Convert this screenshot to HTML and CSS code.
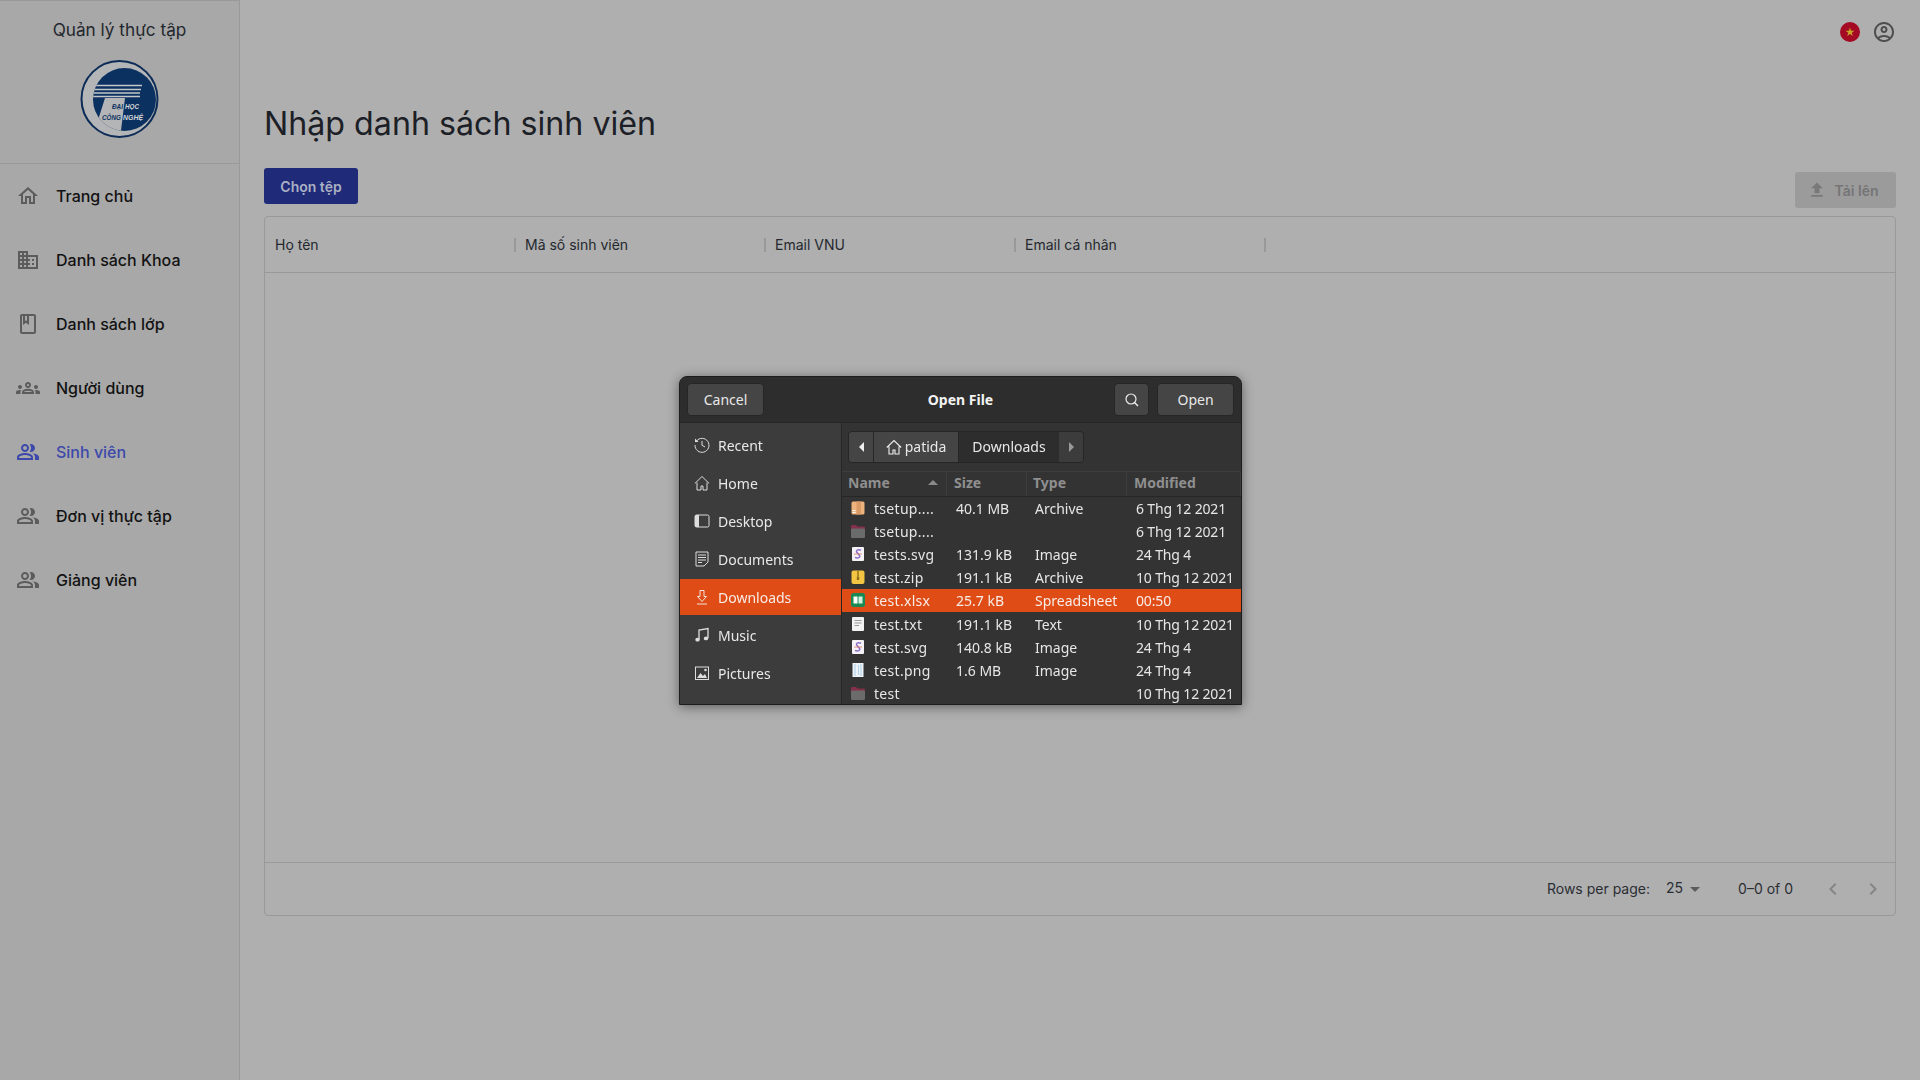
FILE: index.html
```html
<!DOCTYPE html>
<html lang="vi">
<head>
    <meta charset="UTF-8">
    <meta name="viewport" content="width=device-width, initial-scale=1.0">
    <title>Nhập danh sách sinh viên</title>
    <link rel="stylesheet" href="styles.css">
</head>
<body>

<svg class="defs" width="0" height="0">
    <symbol id="i-people" viewBox="0 0 24 24"><path d="M16.67 13.13C18.04 14.06 19 15.32 19 17v3h4v-3c0-2.18-3.57-3.47-6.33-3.87z"/><path d="M15 12c2.21 0 4-1.79 4-4s-1.79-4-4-4c-.47 0-.91.1-1.33.24C14.5 5.27 15 6.58 15 8s-.5 2.73-1.33 3.76c.42.14.86.24 1.33.24z"/><path d="M9 12c2.21 0 4-1.79 4-4s-1.79-4-4-4-4 1.79-4 4 1.79 4 4 4zm0-6c1.1 0 2 .9 2 2s-.9 2-2 2-2-.9-2-2 .9-2 2-2z"/><path d="M9 13c-2.67 0-8 1.34-8 4v3h16v-3c0-2.66-5.33-4-8-4zm6 5H3v-.99C3.2 16.29 6.3 15 9 15s5.8 1.29 6 2z"/></symbol>
    <symbol id="f-folder" viewBox="0 0 16 16"><path fill="#85304a" d="M1 3.500C1 2.500 1.600 2 2.500 2h3.500l1.500 1.500h6c1 0 1.500.5 1.500 1.500v2H1z"/><rect x="1" y="5.500" width="14" height="9.500" rx="1.300" fill="#6b6b6b"/></symbol>
    <symbol id="f-archive" viewBox="0 0 16 16"><rect x="1.5" y="1.5" width="13" height="13" rx="1.5" fill="#eeb27e"/><rect x="6.5" y="1.5" width="4.5" height="13" fill="#d99a66"/><rect x="2.5" y="10" width="3" height="1" fill="#fff"/><rect x="2.5" y="12" width="3" height="1" fill="#fff"/></symbol>
    <symbol id="f-svg" viewBox="0 0 16 16"><rect x="2" y="1" width="12" height="14" rx="1" fill="#f4f2f6"/><path d="M11 4.2C8 2.8 5.4 4.4 7 6.6l2.4 2.6c1.4 2-1.400 3.600-4.400 2.200" fill="none" stroke="#8a6cc8" stroke-width="1.500"/><path d="M4 8h8" stroke="#e2785a" stroke-width=".8"/></symbol>
    <symbol id="f-zip" viewBox="0 0 16 16"><rect x="1.500" y="1.500" width="13" height="13.500" rx="2" fill="#f4c542"/><rect x="7.300" y="1.500" width="1.400" height="7" fill="#8f6f1c"/><rect x="6.800" y="8" width="2.400" height="3" fill="#8f6f1c"/></symbol>
    <symbol id="f-xlsx" viewBox="0 0 16 16"><rect x="1" y="1" width="14" height="14" rx="2.500" fill="#1a8a55"/><rect x="3.500" y="4.500" width="4" height="7" fill="#fff"/><rect x="8.500" y="4.500" width="4" height="7" fill="#d5efe1"/></symbol>
    <symbol id="f-txt" viewBox="0 0 16 16"><rect x="2" y="1" width="12" height="14" rx="1" fill="#f2f2f2"/><path d="M4.500 4.500h7M4.500 7h7M4.500 9.500h4.500" stroke="#9a9a9a" stroke-width="1"/></symbol>
    <symbol id="f-png" viewBox="0 0 16 16"><rect x="2.500" y="1" width="11" height="14" fill="#eef3f8"/><path d="M5 2v12M8 3c2 3-1 6 1 10M11 2v12" stroke="#a9cbe6" stroke-width="1" fill="none"/></symbol>
</svg>

<div class="app">
    <aside class="sidebar">
        <div class="brand">
            <div class="brand-name">Quản lý thực tập</div>
            <svg class="logo" viewBox="0 0 80 80">
                <defs><clipPath id="disk"><circle cx="44.500" cy="40.500" r="31.500"/></clipPath></defs>
                <circle cx="39.500" cy="40" r="38" fill="#b4b5b6" stroke="#0c2c57" stroke-width="2"/>
                <circle cx="44.500" cy="40.500" r="31.500" fill="#0b3160"/>
                <g clip-path="url(#disk)">
                    <polygon points="25,39 45,39 40.700,74 8,74 19,58" fill="#b4b5b6"/>
                    <path d="M10 26.500H62M10 30.500H61M10 34H60M10 37.500H60" stroke="#c4c6c8" stroke-width="1.700"/>
                </g>
                <text class="logo-text" x="32" y="49.500" textLength="11" lengthAdjust="spacingAndGlyphs" fill="#0b3160">ĐẠI</text>
                <text class="logo-text" x="45" y="49.500" textLength="14" lengthAdjust="spacingAndGlyphs" fill="#d5d7d9">HỌC</text>
                <text class="logo-text" x="22" y="61" textLength="19" lengthAdjust="spacingAndGlyphs" fill="#0b3160">CÔNG</text>
                <text class="logo-text" x="43" y="61" textLength="20" lengthAdjust="spacingAndGlyphs" fill="#d5d7d9">NGHỆ</text>
            </svg>
        </div>
        <nav class="nav">
            <a class="nav-item">
                <svg class="nav-icon" viewBox="0 0 24 24"><path d="M12 5.690l5 4.500V18h-2v-6H9v6H7v-7.810l5-4.500M12 3L2 12h3v8h6v-6h2v6h6v-8h3L12 3z"/></svg>
                <span>Trang chủ</span>
            </a>
            <a class="nav-item">
                <svg class="nav-icon" viewBox="0 0 24 24"><path d="M12 7V3H2v18h20V7H12zM6 19H4v-2h2v2zm0-4H4v-2h2v2zm0-4H4V9h2v2zm0-4H4V5h2v2zm4 12H8v-2h2v2zm0-4H8v-2h2v2zm0-4H8V9h2v2zm0-4H8V5h2v2zm10 12h-8v-2h2v-2h-2v-2h2v-2h-2V9h8v10zm-2-8h-2v2h2v-2zm0 4h-2v2h2v-2z"/></svg>
                <span>Danh sách Khoa</span>
            </a>
            <a class="nav-item">
                <svg class="nav-icon" viewBox="0 0 24 24"><path d="M18 2H6c-1.100 0-2 .9-2 2v16c0 1.100.9 2 2 2h12c1.100 0 2-.9 2-2V4c0-1.100-.9-2-2-2zM9 4h2v5l-1-.75L9 9V4zm9 16H6V4h1v9l3-2.250L13 13V4h5v16z"/></svg>
                <span>Danh sách lớp</span>
            </a>
            <a class="nav-item">
                <svg class="nav-icon" viewBox="0 0 24 24"><path d="M4,13c1.100,0,2-0.900,2-2c0-1.100-0.900-2-2-2s-2,0.900-2,2C2,12.100,2.900,13,4,13z M5.130,14.100C4.760,14.040,4.390,14,4,14 c-0.990,0-1.930,0.210-2.780,0.580C0.480,14.900,0,15.620,0,16.430V18l4.500,0v-1.610C4.500,15.560,4.730,14.780,5.130,14.100z M20,13c1.100,0,2-0.900,2-2 c0-1.100-0.900-2-2-2s-2,0.900-2,2C18,12.100,18.900,13,20,13z M24,16.430c0-0.810-0.480-1.530-1.220-1.850C21.930,14.210,20.990,14,20,14 c-0.390,0-0.760,0.040-1.130,0.100c0.400,0.680,0.630,1.460,0.630,2.290V18l4.500,0V16.430z M16.240,13.650c-1.170-0.520-2.610-0.900-4.240-0.900 c-1.630,0-3.070,0.390-4.240,0.900C6.680,14.130,6,15.210,6,16.390V18h12v-1.610C18,15.210,17.320,14.130,16.240,13.650z M8.070,16 c0.090-0.230,0.130-0.390,0.910-0.690c0.970-0.380,1.990-0.560,3.020-0.560s2.050,0.180,3.020,0.560c0.770,0.300,0.810,0.460,0.910,0.690H8.070z M12,8 c0.550,0,1,0.450,1,1s-0.450,1-1,1s-1-0.450-1-1S11.450,8,12,8 M12,6c-1.660,0-3,1.340-3,3c0,1.660,1.340,3,3,3s3-1.340,3-3 C15,7.340,13.660,6,12,6L12,6z"/></svg>
                <span>Người dùng</span>
            </a>
            <a class="nav-item active">
                <svg class="nav-icon"><use href="#i-people"/></svg>
                <span>Sinh viên</span>
            </a>
            <a class="nav-item">
                <svg class="nav-icon"><use href="#i-people"/></svg>
                <span>Đơn vị thực tập</span>
            </a>
            <a class="nav-item">
                <svg class="nav-icon"><use href="#i-people"/></svg>
                <span>Giảng viên</span>
            </a>
        </nav>
    </aside>

    <main class="main">
        <div class="topbar">
            <svg class="flag" viewBox="0 0 20 20">
                <circle cx="10" cy="10" r="10" fill="#a50a24"/>
                <polygon points="10,5.500 11.100,8.700 14.500,8.700 11.800,10.700 12.800,14 10,12 7.200,14 8.200,10.700 5.500,8.700 8.900,8.700" fill="#c9a227"/>
            </svg>
            <svg class="account" viewBox="0 0 24 24"><path d="M12 2C6.480 2 2 6.480 2 12s4.480 10 10 10 10-4.480 10-10S17.520 2 12 2zM7.350 18.500C8.660 17.560 10.260 17 12 17s3.340.56 4.650 1.500c-1.310.94-2.910 1.500-4.650 1.500s-3.340-.56-4.650-1.500zm10.790-1.380C16.450 15.800 14.320 15 12 15s-4.450.8-6.140 2.120C4.700 15.730 4 13.950 4 12c0-4.420 3.580-8 8-8s8 3.580 8 8c0 1.950-.7 3.730-1.860 5.120z"/><path d="M12 6c-1.930 0-3.500 1.570-3.500 3.500S10.070 13 12 13s3.500-1.570 3.500-3.500S13.930 6 12 6zm0 5c-.83 0-1.500-.67-1.500-1.500S11.170 8 12 8s1.500.67 1.500 1.500S12.830 11 12 11z"/></svg>
        </div>

        <h1 class="page-title">Nhập danh sách sinh viên</h1>

        <div class="toolbar">
            <button class="btn-primary">Chọn tệp</button>
            <button class="btn-upload">
                <svg viewBox="0 0 24 24"><path d="M5 20h14v-2H5v2zm0-10h4v6h6v-6h4l-7-7-7 7z"/></svg>
                Tải lên
            </button>
        </div>

        <section class="table-card">
            <div class="table-head">
                <div class="col"><span>Họ tên</span><i class="col-sep"></i></div>
                <div class="col"><span>Mã số sinh viên</span><i class="col-sep"></i></div>
                <div class="col"><span>Email VNU</span><i class="col-sep"></i></div>
                <div class="col"><span>Email cá nhân</span><i class="col-sep"></i></div>
            </div>
            <div class="table-body"></div>
            <div class="table-foot">
                <span class="rows-label">Rows per page:</span>
                <span class="rows-value">25</span>
                <svg class="rows-arrow" viewBox="0 0 24 24"><path d="M7 10l5 5 5-5z"/></svg>
                <span class="rows-range">0–0 of 0</span>
                <svg class="pager" viewBox="0 0 24 24"><path d="M15.410 16.590L10.830 12l4.580-4.590L14 6l-6 6 6 6 1.410-1.410z"/></svg>
                <svg class="pager" viewBox="0 0 24 24"><path d="M8.590 16.590L13.170 12 8.590 7.410 10 6l6 6-6 6-1.410-1.410z"/></svg>
            </div>
        </section>
    </main>
</div>

<div class="scrim">
    <div class="dialog">
        <header class="dlg-head">
            <button class="dlg-btn dlg-cancel">Cancel</button>
            <div class="dlg-title">Open File</div>
            <button class="dlg-btn dlg-search">
                <svg viewBox="0 0 16 16"><circle cx="7" cy="7" r="5" fill="none" stroke="#eee" stroke-width="1.200"/><path d="M10.500 10.500l3.500 3.500" stroke="#eee" stroke-width="1.400"/></svg>
            </button>
            <button class="dlg-btn dlg-open">Open</button>
        </header>
        <div class="dlg-body">
            <ul class="places">
                <li><svg viewBox="0 0 16 16"><path d="M2.500 4A7 7 0 1 1 1 8" fill="none" stroke="#ddd" stroke-width="1"/><path d="M1 1.500V5h3.500z" fill="#ddd"/><path d="M8 4v4.300l3 1.700" fill="none" stroke="#ddd" stroke-width="1"/></svg>Recent</li>
                <li><svg viewBox="0 0 16 16"><path d="M.8 8.500L8 1.500l7.200 7M3 7.500V15h4v-4h2v4h4V7.500" fill="none" stroke="#ddd" stroke-width="1"/></svg>Home</li>
                <li><svg viewBox="0 0 16 16"><rect x="1" y="2" width="14" height="12" rx="1.500" fill="none" stroke="#ddd"/><path d="M1 3.500C1 2.500 1.500 2 2.500 2H5v12H2.500C1.500 14 1 13.500 1 12.500z" fill="#ddd"/></svg>Desktop</li>
                <li><svg viewBox="0 0 16 16"><path d="M2 1h12v10l-4 4H2z" fill="none" stroke="#ddd"/><path d="M4 4h8M4 6.500h8M4 9h8M4 11.500h4" stroke="#ddd"/></svg>Documents</li>
                <li class="selected"><svg viewBox="0 0 16 16"><path d="M6 1.500h4v6h2.500L8 12.500 3.500 7.500H6z" fill="none" stroke="#f3e3da"/><path d="M3 15h10" stroke="#f3e3da"/></svg>Downloads</li>
                <li><svg viewBox="0 0 16 16"><path d="M5 12.500V3l9-1.500V11" fill="none" stroke="#ddd" stroke-width="1.300"/><ellipse cx="3.500" cy="12.700" rx="2.200" ry="1.900" fill="#ddd"/><ellipse cx="12" cy="11.400" rx="2.200" ry="1.900" fill="#ddd"/></svg>Music</li>
                <li><svg viewBox="0 0 16 16"><rect x="1.500" y="2" width="13" height="12.500" fill="none" stroke="#ddd"/><path d="M3 13l3.500-5 2.500 3 2-2 2 4z" fill="#ddd"/><circle cx="11.500" cy="5" r="1.300" fill="#ddd"/></svg>Pictures</li>
            </ul>
            <div class="browser">
                <div class="pathbar-row">
                    <div class="pathbar">
                        <div class="crumb crumb-back"><i class="tri-left"></i></div>
                        <div class="crumb crumb-home">
                            <svg viewBox="0 0 16 16"><path d="M.8 8.500L8 1.500l7.200 7M3 7.500V15h4v-4h2v4h4V7.500" fill="none" stroke="#eee" stroke-width="1.100"/></svg>
                            patida
                        </div>
                        <div class="crumb crumb-current">Downloads</div>
                        <div class="crumb crumb-next"><i class="tri-right"></i></div>
                    </div>
                </div>
                <div class="file-head">
                    <div class="fh-name">Name<i class="tri-up"></i></div>
                    <div>Size</div>
                    <div>Type</div>
                    <div>Modified</div>
                </div>
                <div class="file-list">
                    <div class="file-row"><div class="fname"><svg><use href="#f-archive"/></svg>tsetup....</div><div>40.1 MB</div><div>Archive</div><div class="fdate">6 Thg 12 2021</div></div>
                    <div class="file-row"><div class="fname"><svg><use href="#f-folder"/></svg>tsetup....</div><div></div><div></div><div class="fdate">6 Thg 12 2021</div></div>
                    <div class="file-row"><div class="fname"><svg><use href="#f-svg"/></svg>tests.svg</div><div>131.9 kB</div><div>Image</div><div class="fdate">24 Thg 4</div></div>
                    <div class="file-row"><div class="fname"><svg><use href="#f-zip"/></svg>test.zip</div><div>191.1 kB</div><div>Archive</div><div class="fdate">10 Thg 12 2021</div></div>
                    <div class="file-row selected"><div class="fname"><svg><use href="#f-xlsx"/></svg>test.xlsx</div><div>25.7 kB</div><div>Spreadsheet</div><div class="fdate">00:50</div></div>
                    <div class="file-row"><div class="fname"><svg><use href="#f-txt"/></svg>test.txt</div><div>191.1 kB</div><div>Text</div><div class="fdate">10 Thg 12 2021</div></div>
                    <div class="file-row"><div class="fname"><svg><use href="#f-svg"/></svg>test.svg</div><div>140.8 kB</div><div>Image</div><div class="fdate">24 Thg 4</div></div>
                    <div class="file-row"><div class="fname"><svg><use href="#f-png"/></svg>test.png</div><div>1.6 MB</div><div>Image</div><div class="fdate">24 Thg 4</div></div>
                    <div class="file-row"><div class="fname"><svg><use href="#f-folder"/></svg>test</div><div></div><div></div><div class="fdate">10 Thg 12 2021</div></div>
                </div>
            </div>
        </div>
    </div>
</div>

</body>
</html>
```

FILE: styles.css
```css
* {
    box-sizing: border-box;
}
body {
    margin: 0;
    height: 1080px;
    overflow: hidden;
    background-color: #afafaf;
    color: #1c2026;
    font-family: Inter, "Liberation Sans", sans-serif;
    font-size: 14px;
}
.defs {
    display: block;
    height: 0;
}
.app {
    display: flex;
    height: 1080px;
}

/* sidebar */
.sidebar {
    width: 240px;
    flex-shrink: 0;
    background-color: #a8a8a8;
    border-right: 1px solid #999;
    border-top: 1px solid #999;
}
.brand {
    height: 163px;
    border-bottom: 1px solid #999;
    display: flex;
    flex-direction: column;
    align-items: center;
    padding-top: 18px;
}
.brand-name {
    font-size: 17.200px;
    line-height: 22px;
    color: #23272d;
}
.logo {
    width: 80px;
    height: 80px;
    margin-top: 18px;
}
.logo-text {
    font-family: "Liberation Sans", sans-serif;
    font-size: 7px;
    font-weight: bold;
    font-style: italic;
}
.nav-item {
    display: flex;
    align-items: center;
    height: 64px;
    padding-left: 16px;
    font-size: 16px;
    font-weight: 500;
    color: #121212;
}
.nav-icon {
    width: 24px;
    height: 24px;
    margin-right: 16px;
    fill: #5c5c5c;
}
.nav-item.active {
    color: #3c49ab;
}
.nav-item.active .nav-icon {
    fill: #3c49ab;
}

/* main */
.main {
    flex: 1;
    min-width: 0;
    padding: 0 24px;
}
.topbar {
    height: 64px;
    display: flex;
    align-items: center;
    justify-content: flex-end;
    gap: 12px;
}
.flag {
    width: 20px;
    height: 20px;
}
.account {
    width: 24px;
    height: 24px;
    fill: #4d4d4d;
}
.page-title {
    margin: 39px 0 23px;
    font-size: 32.200px;
    font-weight: 400;
    line-height: 42px;
    color: #1c2026;
}
.toolbar {
    display: flex;
    justify-content: space-between;
    height: 40px;
}
.btn-primary {
    height: 36px;
    width: 94px;
    border: none;
    border-radius: 3px;
    background-color: #1f2a78;
    color: #aab0c4;
    font: 600 14px Inter, sans-serif;
}
.btn-upload {
    align-self: flex-end;
    height: 36px;
    width: 101px;
    border: none;
    border-radius: 3px;
    background-color: #9b9b9b;
    color: #757575;
    font: 600 14px Inter, sans-serif;
    display: flex;
    align-items: center;
    justify-content: center;
    gap: 8px;
    padding: 0 6px 0 0;
}
.btn-upload svg {
    width: 20px;
    height: 20px;
    fill: #797979;
}
.table-card {
    margin-top: 8px;
    height: 700px;
    border: 1px solid #999;
    border-radius: 4px;
    display: flex;
    flex-direction: column;
}
.table-head {
    height: 56px;
    display: flex;
    align-items: center;
    border-bottom: 1px solid #999;
    color: #24282e;
}
.col {
    width: 250px;
    padding-left: 10px;
    display: flex;
    align-items: center;
    justify-content: space-between;
}
.col-sep {
    width: 2px;
    height: 14px;
    margin-right: -1px;
    background-color: #999;
}
.table-body {
    flex: 1;
}
.table-foot {
    height: 53px;
    border-top: 1px solid #999;
    display: flex;
    align-items: center;
    justify-content: flex-end;
    padding: 0 10px 1px 0;
    color: #2a2e34;
}
.rows-value {
    margin: 0 0 2px 16px;
}
.rows-arrow {
    width: 24px;
    height: 24px;
    fill: #5c5c5c;
}
.rows-range {
    margin: 0 28px 0 31px;
}
.pager {
    width: 24px;
    height: 24px;
    fill: #858585;
    margin-right: 16px;
}
.pager:last-child {
    margin-right: 0;
}

/* file chooser */
.scrim {
    position: fixed;
    inset: 0;
    display: flex;
    align-items: center;
    justify-content: center;
}
.dialog {
    width: 563px;
    height: 329px;
    margin-left: 1px;
    margin-top: 1px;
    background-color: #333;
    border: 1px solid #1d1d1d;
    border-radius: 8px 8px 0 0;
    box-shadow: 0 2px 12px rgba(0, 0, 0, 0.45);
    overflow: hidden;
    display: flex;
    flex-direction: column;
    color: #eee;
    font-family: "Noto Sans", sans-serif;
    font-size: 14px;
}
.dlg-head {
    height: 46px;
    flex-shrink: 0;
    background-color: #2d2d2d;
    border-bottom: 1px solid #262626;
    display: flex;
    align-items: center;
    padding: 0 7px;
}
.dlg-title {
    flex: 1;
    margin-left: 43px;
    text-align: center;
    font-weight: 700;
    color: #f2f2f2;
}
.dlg-btn {
    height: 33px;
    background-color: #454545;
    border: 1px solid #262626;
    border-radius: 4px;
    color: #e8e8e8;
    font: 14px "Noto Sans", sans-serif;
    padding: 0;
}
.dlg-cancel,
.dlg-open {
    width: 77px;
}
.dlg-search {
    width: 35px;
    margin-right: 8px;
    padding-left: 1px;
    display: flex;
    align-items: center;
    justify-content: center;
}
.dlg-search svg {
    width: 16px;
    height: 16px;
}
.dlg-body {
    flex: 1;
    display: flex;
    min-height: 0;
}
.places {
    width: 162px;
    flex-shrink: 0;
    margin: 0;
    padding: 4px 0 0;
    list-style: none;
    background-color: #3c3c3c;
    border-right: 1px solid #262626;
}
.places li {
    height: 36px;
    margin-bottom: 2px;
    display: flex;
    align-items: center;
    padding-left: 14px;
    color: #e8e8e8;
}
.places li svg {
    width: 16px;
    height: 16px;
    margin-right: 8px;
}
.places li.selected {
    background-color: #e04c16;
    color: #f7ece6;
}
.browser {
    flex: 1;
    min-width: 0;
    display: flex;
    flex-direction: column;
}
.pathbar-row {
    height: 48px;
    flex-shrink: 0;
    padding: 8px 6px;
}
.pathbar {
    display: inline-flex;
    height: 32px;
    border: 1px solid #262626;
    border-radius: 4px;
    overflow: hidden;
}
.crumb {
    display: flex;
    align-items: center;
    justify-content: center;
    background-color: #454545;
    border-right: 1px solid #262626;
    color: #e8e8e8;
    padding-bottom: 1px;
}
.crumb-back {
    width: 25px;
}
.crumb-home {
    width: 85px;
    gap: 3px;
}
.crumb-home svg {
    width: 16px;
    height: 16px;
}
.crumb-current {
    width: 100px;
    background-color: #2d2d2d;
    border-right: none;
}
.crumb-next {
    width: 24px;
    border-right: none;
    background-color: #3c3c3c;
}
.tri-left {
    border: 5px solid transparent;
    border-left: none;
    border-right-color: #eee;
}
.tri-right {
    border: 5px solid transparent;
    border-right: none;
    border-left-color: #999;
}
.tri-up {
    border: 5px solid transparent;
    border-top: none;
    border-bottom-color: #8a8a8a;
    margin-right: 8px;
}
.file-head {
    height: 26px;
    flex-shrink: 0;
    display: grid;
    grid-template-columns: 105px 80px 100px 1fr;
    border-top: 1px solid #3d3d3d;
    border-bottom: 1px solid #262626;
    background-color: #333;
    color: #8f8f8f;
    font-weight: 700;
    font-size: 14px;
}
.file-head > div {
    display: flex;
    align-items: center;
    padding: 0 0 3px 6px;
    border-right: 1px solid #3d3d3d;
}
.file-head > div:nth-child(even) {
    padding-left: 7px;
}
.fh-name {
    justify-content: space-between;
}
.file-list {
    flex: 1;
    min-height: 0;
    overflow: hidden;
}
.file-row {
    height: 23.100px;
    display: grid;
    grid-template-columns: 114px 79px 101px 1fr;
    align-items: center;
    color: #e6e6e6;
    white-space: nowrap;
}
.file-row.selected {
    background-color: #e04c16;
    color: #f7ece6;
}
.fname {
    display: flex;
    align-items: center;
    padding-left: 8px;
    letter-spacing: 0.300px;
}
.fname svg {
    width: 16px;
    height: 16px;
    margin: -1px 8px 0 0;
    flex-shrink: 0;
}
.fdate {
    letter-spacing: -0.150px;
}
```
